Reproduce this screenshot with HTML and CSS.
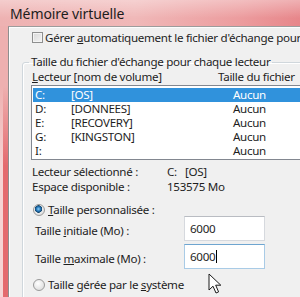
FILE: index.html
```html
<!DOCTYPE html>
<html>

<head>
    <meta name="viewport" content="width=device-width, initial-scale=1.0">
    <title>Mémoire virtuelle</title>
    <link rel="stylesheet" href="styles.css">
</head>

<body>
    <div class="window">
        <div class="titlebar"><span class="title">Mémoire virtuelle</span></div>
        <div class="frame">
            <div class="edge"></div>
            <div class="client">
                <div class="check-row">
                    <span class="checkbox"></span>
                    <span>Gérer <u>a</u>utomatiquement le fichier d'échange pour</span>
                </div>

                <fieldset class="group">
                    <legend>Taille du fichier d'échange pour chaque lecteur</legend>

                    <div class="list-head">
                        <span><u>L</u>ecteur [nom de volume]</span>
                        <span>Taille du fichier</span>
                    </div>

                    <div class="listbox">
                        <div class="row selected"><span>C:</span><span>[OS]</span><span>Aucun</span></div>
                        <div class="row"><span>D:</span><span>[DONNEES]</span><span>Aucun</span></div>
                        <div class="row"><span>E:</span><span>[RECOVERY]</span><span>Aucun</span></div>
                        <div class="row"><span>G:</span><span>[KINGSTON]</span><span>Aucun</span></div>
                        <div class="row"><span>I:</span><span></span><span>Aucun</span></div>
                    </div>

                    <div class="info first">
                        <span>Lecteur sélectionné :</span>
                        <span>C:&nbsp;&nbsp;&nbsp;[OS]</span>
                    </div>
                    <div class="info">
                        <span>Espace disponible :</span>
                        <span>153575 Mo</span>
                    </div>

                    <div class="radio-row custom">
                        <span class="radio checked"></span>
                        <span><u>T</u>aille personnalisée :</span>
                    </div>
                    <div class="field-row initial">
                        <span class="field-label">Taille <u>i</u>nitiale (Mo) :</span>
                        <span class="textbox">6000</span>
                    </div>
                    <div class="field-row maximum">
                        <span class="field-label">Taille <u>m</u>aximale (Mo) :</span>
                        <span class="textbox focused">6000<span class="caret"></span></span>
                    </div>
                    <div class="radio-row system">
                        <span class="radio"></span>
                        <span>Taille gérée par le <u>s</u>ystème</span>
                    </div>
                </fieldset>
            </div>
        </div>

        <!-- mouse pointer over the dialog -->
        <svg class="pointer" width="14" height="22" viewBox="0 0 14 22">
            <path d="M1 1 L1 17 L5 13.2 L8 20 L10.6 18.9 L7.7 12.2 L12.8 12.2 Z" fill="#fff" stroke="#1a1a1a"
                stroke-width="1" stroke-linejoin="round" />
        </svg>
    </div>
</body>

</html>
```

FILE: styles.css
```css
* {
    box-sizing: border-box;
}

body {
    margin: 0;
    width: 300px;
    height: 297px;
    overflow: hidden;
    font-family: "Noto Sans", "Open Sans", sans-serif;
    font-size: 11.6px;
    letter-spacing: -0.3px;
    color: #1e1e1e;
    background: #f0b6b6;
}

u {
    text-decoration-thickness: 1px;
    text-underline-offset: 1px;
}

.window {
    position: relative;
    width: 300px;
    height: 297px;
    overflow: hidden;
    display: flex;
    flex-direction: column;
}

.titlebar {
    height: 26px;
    flex: none;
    display: flex;
    align-items: center;
    padding-left: 10px;
    background:
        linear-gradient(to bottom, rgba(255, 255, 255, 0.35), rgba(255, 255, 255, 0) 70%),
        linear-gradient(to right, #eeb2b2 0%, #f0b8b8 45%, #ec9c9e 80%, #e7868a 100%);
}

.title {
    font-size: 14px;
    letter-spacing: -0.1px;
    color: #1c1c1c;
}

.frame {
    flex: 1;
    display: flex;
    min-height: 0;
}

.edge {
    width: 8px;
    flex: none;
    background:
        linear-gradient(to bottom, #eeb0b0 0, #eeb0b0 60px, rgba(238, 176, 176, 0) 140px),
        linear-gradient(to right, #f6d4d4 0, #f6d4d4 3px, #e46a6e 3px, #e46a6e 8px);
}

.client {
    flex: 1;
    min-width: 0;
    background: #f0f0f0;
    border-left: 1px solid #8f8f8f;
    border-top: 1px solid #9c9c9c;
    box-shadow: inset 1px 1px #fdfdfd;
}

/* top checkbox */
.check-row {
    display: flex;
    align-items: center;
    gap: 2px;
    height: 15px;
    margin: 3px 0 10px 23px;
    white-space: nowrap;
}

.checkbox {
    width: 11px;
    height: 11px;
    flex: none;
    border: 1px solid #8e8f8f;
    background: linear-gradient(135deg, #d9d9d9, #f4f4f4);
    box-shadow: inset 0 0 0 1px #f4f4f4;
}

/* group box */
.group {
    margin: 0 -40px 0 13px;
    padding: 1px 0 0 9px;
    border: 1px solid #d0d7dc;
    border-radius: 3px;
    box-shadow: inset 1px 1px #fff;
    height: 260px;
}

.group legend {
    margin-left: -3px;
    padding: 0 2px;
    line-height: 14px;
    white-space: nowrap;
}

.list-head {
    display: grid;
    grid-template-columns: 186px auto;
    line-height: 14px;
    white-space: nowrap;
}

.listbox {
    margin: 1px 0 0 -1px;
    padding: 2px 0 1px 1px;
    border: 1px solid #828790;
    background: #fff;
}

.row {
    display: grid;
    grid-template-columns: 36px 162px auto;
    height: 14px;
    line-height: 14px;
    padding-left: 2px;
    white-space: nowrap;
}

.row.selected {
    background: #3092dc;
    color: #fff;
}

.info {
    display: grid;
    grid-template-columns: 135px auto;
    line-height: 15px;
    white-space: nowrap;
}

.info.first {
    margin-top: 4px;
}

/* radios and sizes */
.radio-row {
    display: flex;
    align-items: center;
    gap: 3px;
    height: 15px;
    padding-left: 1px;
    white-space: nowrap;
}

.radio-row.custom {
    margin-top: 8px;
}

.radio-row.system {
    margin-top: 8px;
}

.radio {
    width: 12px;
    height: 12px;
    flex: none;
    border-radius: 50%;
    border: 1px solid #9a9a9a;
    background: radial-gradient(circle at 40% 35%, #ffffff, #e2e2e2 70%);
}

.radio.checked {
    background:
        radial-gradient(circle at 45% 40%, #8fd0f5 0, #2a7dc0 2px, #14466e 3.5px, rgba(20, 70, 110, 0) 4px),
        radial-gradient(circle at 40% 35%, #ffffff, #e2e2e2 70%);
}

.field-row {
    display: grid;
    grid-template-columns: 152px 81px;
    align-items: center;
    white-space: nowrap;
}

.field-row.initial {
    margin-top: -1px;
}

.field-row.maximum {
    margin-top: 3px;
}

.field-label {
    padding: 3px 0 0 3px;
}

.textbox {
    display: flex;
    align-items: center;
    height: 25px;
    padding-left: 5px;
    background: #fff;
    border: 1px solid #d6d9de;
    border-top-color: #b9bcc2;
}

.textbox.focused {
    border-color: #a9cbe6;
    border-top-color: #6ea5d0;
}

.caret {
    display: inline-block;
    width: 1px;
    height: 13px;
    margin-left: 1px;
    background: #000;
}

.pointer {
    position: absolute;
    left: 208px;
    top: 273px;
}
```
